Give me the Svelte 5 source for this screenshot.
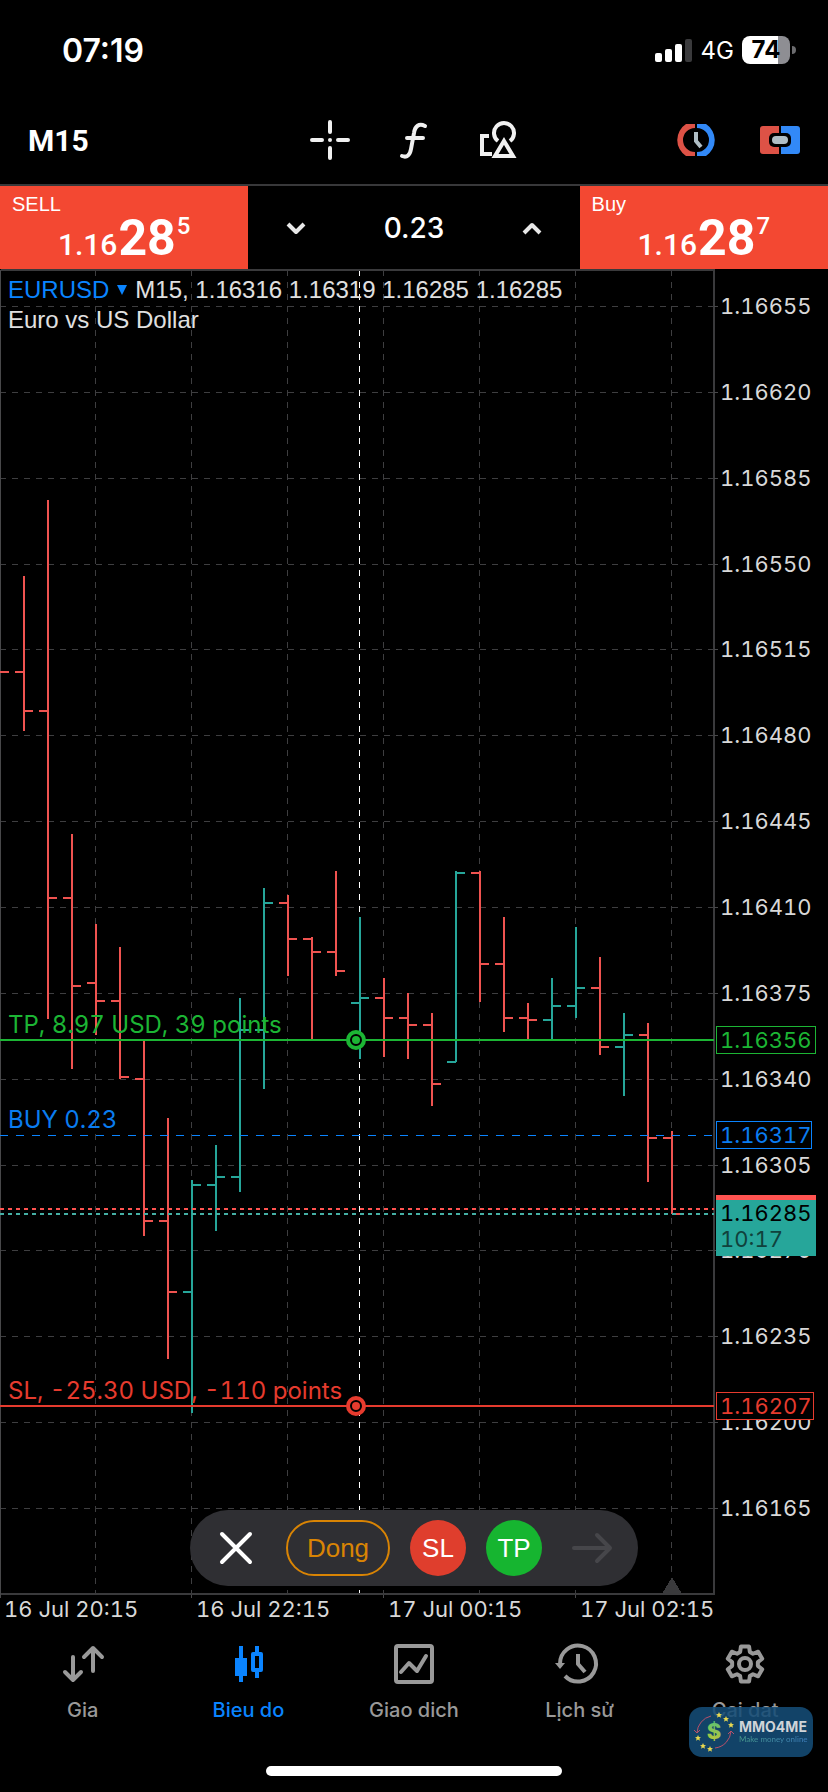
<script lang="ts">
	interface Bar {
		open: number;
		high: number;
		low: number;
		close: number;
		up?: boolean;
	}

	let volume = $state('0.23');
	let activeTab = $state('chart');

	const tabs = [
		{ id: 'quotes', label: 'Gia' },
		{ id: 'chart', label: 'Bieu do' },
		{ id: 'trade', label: 'Giao dich' },
		{ id: 'history', label: 'Lịch sử' },
		{ id: 'settings', label: 'Cai dat' }
	];

	const BAR_STEP = 24;
	const TICK = 9;
	const PLOT_RIGHT = 714;
	const PLOT_TOP = 270;
	const PLOT_BOTTOM = 1594;

	// bar levels in chart units, top = 0
	const bars: Bar[] = [
		{ open: 672, high: 576, low: 731, close: 711 },
		{ open: 711, high: 500, low: 1019, close: 898 },
		{ open: 898, high: 834, low: 1069, close: 986 },
		{ open: 983, high: 924, low: 1035, close: 1001 },
		{ open: 1001, high: 947, low: 1079, close: 1077 },
		{ open: 1079, high: 1041, low: 1236, close: 1221 },
		{ open: 1221, high: 1118, low: 1359, close: 1292 },
		{ open: 1292, high: 1180, low: 1413, close: 1185, up: true },
		{ open: 1185, high: 1145, low: 1231, close: 1177, up: true },
		{ open: 1177, high: 998, low: 1192, close: 1030, up: true },
		{ open: 1030, high: 888, low: 1089, close: 903, up: true },
		{ open: 903, high: 895, low: 976, close: 939 },
		{ open: 939, high: 937, low: 1039, close: 952 },
		{ open: 952, high: 871, low: 976, close: 971 },
		{ open: 1003, high: 917, low: 1059, close: 998, up: true },
		{ open: 998, high: 978, low: 1057, close: 1018 },
		{ open: 1018, high: 993, low: 1059, close: 1025 },
		{ open: 1025, high: 1013, low: 1106, close: 1084 },
		{ open: 1062, high: 871, low: 1062, close: 873, up: true },
		{ open: 873, high: 871, low: 1002, close: 964 },
		{ open: 964, high: 917, low: 1032, close: 1018 },
		{ open: 1018, high: 1003, low: 1041, close: 1020 },
		{ open: 1020, high: 978, low: 1039, close: 1006, up: true },
		{ open: 1006, high: 927, low: 1018, close: 988, up: true },
		{ open: 988, high: 957, low: 1055, close: 1047 },
		{ open: 1047, high: 1013, low: 1096, close: 1035, up: true },
		{ open: 1035, high: 1023, low: 1182, close: 1138 },
		{ open: 1138, high: 1131, low: 1214, close: 1214 }
	];

	const gridX = [95, 191, 287, 383, 479, 575, 671];

	// 35 points between grid lines
	const gridY = Array.from({ length: 15 }, (_, i) => ({
		y: Math.round(306 + (i * 1202) / 14),
		price: (1.16655 - i * 0.00035).toFixed(5)
	}));

	const times = [
		{ x: 0, text: '16 Jul 20:15' },
		{ x: 192, text: '16 Jul 22:15' },
		{ x: 384, text: '17 Jul 00:15' },
		{ x: 576, text: '17 Jul 02:15' }
	];

	const levels = [
		{ kind: 'tp', y: 1040, label: 'TP, 8.97 USD, 39 points', price: '1.16356', box: 100 },
		{ kind: 'entry', y: 1135, label: 'BUY 0.23', price: '1.16317', box: 96 },
		{ kind: 'sl', y: 1406, label: 'SL, -25.30 USD, -110 points', price: '1.16207', box: 98 }
	];

	const gear = Array.from({ length: 6 }, (_, i) => {
		const at = (r: number, deg: number) => {
			const a = ((i * 60 - 90 + deg) * Math.PI) / 180;
			return `${(20 + r * Math.cos(a)).toFixed(2)},${(20 + r * Math.sin(a)).toFixed(2)}`;
		};
		return [at(13, -22), at(18, -13), at(18, 13), at(13, 22)].join(' ');
	}).join(' ');

	const stars = [
		[30, 8], [37, 12], [42, 18], [9, 31], [14, 39], [21, 42]
	];

	function barPath(bar: Bar, x: number) {
		return `M${x} ${bar.high}V${bar.low}M${x - TICK} ${bar.open}H${x}M${x} ${bar.close}H${x + TICK}`;
	}

	function step(delta: number) {
		volume = Math.max(0.01, Number(volume) + delta).toFixed(2);
	}
</script>

{#snippet price(base: string, big: string, sup: string)}
	<span class="price">
		<span class="price-base">{base}</span>
		<span class="price-big">{big}</span>
		<span class="price-sup">{sup}</span>
	</span>
{/snippet}

<div class="app">
	<header class="status">
		<time class="clock">07:19</time>
		<div class="status-right">
			<svg class="signal" viewBox="0 0 38 24" aria-hidden="true">
				<rect x="0" y="15" width="7" height="9" rx="2" />
				<rect x="10" y="11" width="7" height="13" rx="2" />
				<rect x="20" y="6" width="7" height="18" rx="2" />
				<rect class="signal-off" x="30" y="1" width="7" height="23" rx="2" />
			</svg>
			<span class="network">4G</span>
			<span class="battery"><span class="battery-level">74</span></span>
		</div>
	</header>

	<nav class="toolbar">
		<button class="timeframe" type="button">M15</button>
		<div class="tools">
			<button class="icon-button" type="button" aria-label="Crosshair">
				<svg viewBox="0 0 40 40" class="line-icon">
					<path d="M20 2V12M20 28V38M2 20H12M28 20H38" />
					<circle cx="20" cy="20" r="2" fill="currentColor" stroke="none" />
				</svg>
			</button>
			<button class="icon-button" type="button" aria-label="Indicators">
				<svg viewBox="0 0 40 40" class="line-icon">
					<path d="M31 6C25 3 21 6 20 13L17 29C16 35 13 38 8 36M13 18H29" />
				</svg>
			</button>
			<button class="icon-button" type="button" aria-label="Objects">
				<svg viewBox="0 0 40 40" class="line-icon">
					<path d="M20 21A10 10 0 1 1 32 21" stroke-linecap="butt" />
					<path d="M26 21L35 36H17Z" stroke-linejoin="miter" />
					<path d="M11 16H4V34H14" stroke-linecap="butt" stroke-linejoin="miter" />
				</svg>
			</button>
		</div>
		<div class="tools tools-end">
			<button class="icon-button" type="button" aria-label="Trading sessions">
				<svg viewBox="0 0 40 40">
					<path class="fill-red" d="M19 4H10A19 19 0 0 0 10 36H19V32A12 12 0 0 1 19 8Z" />
					<path class="fill-blue" d="M21 4H30A19 19 0 0 1 30 36H21V32A12 12 0 0 0 21 8Z" />
					<path class="hand" d="M20 12V21L25 27" />
				</svg>
			</button>
			<button class="icon-button" type="button" aria-label="One click trading">
				<svg viewBox="0 0 40 40">
					<path class="fill-red" d="M3 6H19V34H3Q0 34 0 31V9Q0 6 3 6Z" />
					<path class="fill-blue" d="M21 6H37Q40 6 40 9V31Q40 34 37 34H21Z" />
					<rect x="9" y="13" width="22" height="14" rx="5" />
					<rect class="fill-pill" x="12" y="16" width="16" height="8" rx="4" />
				</svg>
			</button>
		</div>
	</nav>

	<section class="deal">
		<button class="side" type="button">
			<span class="side-label">SELL</span>
			{@render price('1.16', '28', '5')}
		</button>
		<div class="volume">
			<button class="step" type="button" aria-label="Decrease volume" onclick={() => step(-0.01)}>
				<svg viewBox="0 0 24 24" class="line-icon"><path d="M4 8L12 16L20 8" stroke-linecap="butt" /></svg>
			</button>
			<input aria-label="Volume" bind:value={volume} />
			<button class="step" type="button" aria-label="Increase volume" onclick={() => step(0.01)}>
				<svg viewBox="0 0 24 24" class="line-icon"><path d="M4 17L12 9L20 17" stroke-linecap="butt" /></svg>
			</button>
		</div>
		<button class="side" type="button">
			<span class="side-label">Buy</span>
			{@render price('1.16', '28', '7')}
		</button>
	</section>

	<main class="chart">
		<svg class="plot" viewBox="0 268 828 1360" role="img" aria-label="EURUSD M15 bar chart">
			<g class="grid">
				{#each gridX as x}
					<path d="M{x}.5 {PLOT_TOP}V{PLOT_BOTTOM}" />
				{/each}
				{#each gridY as line}
					<path d="M0 {line.y}.5H{PLOT_RIGHT}" />
				{/each}
			</g>
			<path class="period" d="M359.5 {PLOT_TOP}V{PLOT_BOTTOM}" />

			<path class="frame" d="M1 {PLOT_TOP}H{PLOT_RIGHT}V{PLOT_BOTTOM}H0" />
			<path class="ticks" d="M0.5 {PLOT_TOP}V1598M191.5 1595V1598M383.5 1595V1598M575.5 1595V1598" />
			<path class="marker" d="M672 1577L682 1594H662Z" />

			<!-- close of the bar just off the left edge -->
			<path class="bar" d="M0 {bars[0].open}H{TICK}" />
			{#each bars as bar, i}
				<path class={bar.up ? 'bar up' : 'bar'} d={barPath(bar, (i + 1) * BAR_STEP)} />
			{/each}

			<path class="quote ask" d="M0 1209H{PLOT_RIGHT}" />
			<path class="quote bid" d="M0 1214H{PLOT_RIGHT}" />

			{#each gridY as line}
				<path class="ticks" d="M{PLOT_RIGHT} {line.y}.5H718" />
				<text x="720" y={line.y + 8}>{line.price}</text>
			{/each}

			{#each levels as level}
				<g class={level.kind}>
					<path class="level" d="M0 {level.y}H{PLOT_RIGHT}" />
					<text class="level-label" x="8" y={level.y - 7}>{level.label}</text>
					<rect class="tag" x="716.5" y={level.y - 13.5} width={level.box - 1} height="27" />
					<text x="720" y={level.y + 8}>{level.price}</text>
					{#if level.kind !== 'entry'}
						<circle class="handle" cx="356" cy={level.y} r="8" />
						<circle class="handle-dot" cx="356" cy={level.y} r="4" />
					{/if}
				</g>
			{/each}

			<rect class="ask-tag" x="716" y="1195" width="100" height="10" />
			<rect class="bid-tag" x="716" y="1200" width="100" height="56" />
			<text class="bid-price" x="720" y="1221">1.16285</text>
			<text class="bid-timer" x="720" y="1247">10:17</text>

			{#each times as time}
				<text x={time.x + 4} y="1617">{time.text}</text>
			{/each}
		</svg>

		<div class="symbol">
			<div class="symbol-row">
				<button type="button" class="symbol-name">
					EURUSD
					<svg viewBox="0 0 10 10" width="10" height="10"><path d="M0 0H10L5 10Z" fill="currentColor" /></svg>
				</button>
				<span>M15, 1.16316 1.16319 1.16285 1.16285</span>
			</div>
			<div>Euro vs US Dollar</div>
		</div>

		<div class="position-bar">
			<button type="button" class="dismiss" aria-label="Dismiss">
				<svg viewBox="0 0 40 40" class="line-icon"><path d="M6 6L34 34M34 6L6 34" /></svg>
			</button>
			<button type="button" class="close-position">Dong</button>
			<button type="button" class="round round-sl">SL</button>
			<button type="button" class="round round-tp">TP</button>
			<button type="button" class="next" aria-label="Next">
				<svg viewBox="0 0 40 40" class="line-icon"><path d="M2 20H37M25 7L38 20L25 33" /></svg>
			</button>
		</div>
	</main>

	<nav class="tabs">
		{#each tabs as tab}
			<button
				type="button"
				class="tab"
				class:active={activeTab === tab.id}
				onclick={() => (activeTab = tab.id)}
			>
				<svg viewBox="0 0 40 40" class="line-icon">
					{#if tab.id === 'quotes'}
						<path d="M10 13V36M2 28L10 36L18 28M30 27V4M21 13L30 4L39 13" />
					{:else if tab.id === 'chart'}
						<path d="M13 2V38M29 2V8M29 28V34" stroke-linecap="butt" />
						<rect x="7" y="14" width="12" height="18" fill="currentColor" stroke="none" />
						<rect x="25" y="10" width="8" height="16" />
					{:else if tab.id === 'trade'}
						<rect x="2" y="2" width="36" height="36" rx="2" />
						<path d="M7 28L15 19L23 27L32 12" />
					{:else if tab.id === 'history'}
						<path d="M0 20A18 18 0 1 1 5 32" stroke-linecap="butt" />
						<path d="M18 10V20L25 28" stroke-linecap="butt" />
						<path d="M-5 19H5L0 25Z" fill="currentColor" stroke="none" />
					{:else}
						<polygon points={gear} />
						<circle cx="20" cy="20" r="6" />
					{/if}
				</svg>
				<span>{tab.label}</span>
			</button>
		{/each}
	</nav>

	<div class="home"></div>

	<a class="badge" href="#mmo4me">
		<svg viewBox="0 0 50 50" width="50" height="50" aria-hidden="true">
			<defs>
				<linearGradient id="dollar" x1="0" y1="0" x2="0" y2="1">
					<stop offset="0" stop-color="#4cc07a" />
					<stop offset="1" stop-color="#c8c832" />
				</linearGradient>
			</defs>
			<path class="swoosh" d="M22 9A18 18 0 0 0 8 26M5 23L8 26L11 23" />
			<path class="swoosh" d="M26 41A18 18 0 0 0 42 24M39 27L42 24L45 27" />
			<text class="dollar" x="25" y="32" text-anchor="middle" fill="url(#dollar)">$</text>
			{#each stars as [x, y]}
				<path
					class="star"
					transform="translate({x} {y})"
					d="M0-3L.9-1L3-.8L1.4.6L1.9 2.7L0 1.6L-1.9 2.7L-1.4.6L-3-.8L-.9-1Z"
				/>
			{/each}
		</svg>
		<span class="badge-text">
			<strong>MMO4ME</strong>
			<small>Make money online</small>
		</span>
	</a>
</div>

<style>
	:global(body) {
		background: #000;
	}

	.app {
		position: relative;
		display: flex;
		flex-direction: column;
		background: #000;
		color: #fff;
		font-family: Inter, 'Liberation Sans', sans-serif;
	}

	button,
	input {
		margin: 0;
		padding: 0;
		border: none;
		background: none;
		color: inherit;
		font: inherit;
	}

	button {
		cursor: pointer;
	}

	svg {
		display: block;
	}

	.line-icon {
		fill: none;
		stroke: currentColor;
		stroke-width: 4;
		stroke-linecap: round;
		stroke-linejoin: round;
		overflow: visible;
	}

	/* status bar */
	.status {
		display: flex;
		align-items: center;
		justify-content: space-between;
		height: 100px;
		padding: 0 32px 0 62px;
	}

	.clock {
		font-size: 32px;
		font-weight: 600;
	}

	.status-right {
		display: flex;
		align-items: center;
		gap: 8px;
	}

	.signal {
		width: 38px;
		height: 24px;
		fill: #fff;
	}

	.signal-off {
		fill: #3a3a3c;
	}

	.network {
		font-size: 24px;
	}

	.battery {
		position: relative;
		width: 48px;
		height: 28px;
		margin-right: 6px;
		border-radius: 8px;
		background: linear-gradient(90deg, #fff 75%, #8e8e93 75%);
	}

	.battery::after {
		content: '';
		position: absolute;
		top: 10px;
		right: -6px;
		width: 4px;
		height: 8px;
		border-radius: 0 4px 4px 0;
		background: #6b6b6e;
	}

	.battery-level {
		display: block;
		color: #000;
		font-size: 24px;
		font-weight: 700;
		line-height: 28px;
		text-align: center;
	}

	/* toolbar */
	.toolbar {
		display: grid;
		grid-template-columns: 1fr auto 1fr;
		align-items: center;
		height: 80px;
		padding: 0 28px 4px;
		border-bottom: 2px solid #38383a;
	}

	.timeframe {
		justify-self: start;
		font-family: Roboto, sans-serif;
		font-size: 30px;
		font-weight: 700;
	}

	.tools {
		display: flex;
		gap: 44px;
		color: #f0f0f0;
	}

	.tools-end {
		justify-content: flex-end;
	}

	.icon-button {
		width: 40px;
		height: 40px;
	}

	.fill-red {
		fill: #dd5246;
	}

	.fill-blue {
		fill: #3289f7;
	}

	.fill-pill {
		fill: #b0bec5;
	}

	.hand {
		fill: none;
		stroke: #b0bec5;
		stroke-width: 4;
	}

	/* one click trading */
	.deal {
		display: grid;
		grid-template-columns: 3fr 4fr 3fr;
		height: 82px;
	}

	.side {
		display: flex;
		flex-direction: column;
		background: #f34832;
		text-align: left;
	}

	.side-label {
		padding: 8px 12px 0;
		font-family: 'Liberation Sans', sans-serif;
		font-size: 20px;
		line-height: 20px;
	}

	.price {
		display: flex;
		align-items: baseline;
		align-self: center;
		gap: 1px;
		font-family: Roboto, sans-serif;
		font-weight: 700;
		line-height: 48px;
	}

	.price-base {
		font-size: 30px;
		font-weight: 500;
	}

	.price-big {
		font-size: 50px;
	}

	.price-sup {
		align-self: flex-start;
		font-size: 24px;
		font-weight: 500;
		line-height: 24px;
	}

	.volume {
		display: flex;
		align-items: center;
		justify-content: space-between;
		padding: 0 36px;
	}

	.volume input {
		width: 120px;
		font-size: 28px;
		font-weight: 500;
		text-align: center;
	}

	.step {
		width: 24px;
		height: 24px;
		color: #e8e8e8;
	}

	/* chart */
	.chart {
		position: relative;
	}

	.plot {
		width: 100%;
		fill: #d8d8d8;
		font-size: 22px;
		font-variant-numeric: tabular-nums;
	}

	.plot path {
		fill: none;
		shape-rendering: crispEdges;
	}

	.grid path {
		stroke: #3e3e40;
		stroke-dasharray: 6 6;
	}

	.period {
		stroke: #fff;
		stroke-dasharray: 6 6;
	}

	.frame {
		stroke: #3a3a3c;
		stroke-width: 2;
	}

	.ticks {
		stroke: #48484a;
	}

	.plot .marker {
		fill: #3a3a3c;
	}

	.bar {
		stroke: #ef5350;
		stroke-width: 2;
	}

	.up {
		stroke: #26a69a;
	}

	.quote {
		stroke-width: 2;
		stroke-dasharray: 4 4;
	}

	.ask {
		stroke: #ff5350;
	}

	.bid {
		stroke: #45b0a5;
	}

	.tp {
		fill: #1cb534;
		stroke: #1cb534;
	}

	.entry {
		fill: #0a7cf0;
		stroke: #0a84ff;
	}

	.sl {
		fill: #e63b2e;
		stroke: #e63b2e;
	}

	.plot text {
		stroke: none;
	}

	.level {
		stroke-width: 2;
	}

	.level-label {
		font-size: 24px;
	}

	.entry .level {
		stroke-width: 1;
		stroke-dasharray: 8 8;
	}

	.tag {
		fill: #000;
		shape-rendering: crispEdges;
	}

	.handle {
		fill: #000;
		stroke-width: 4;
	}

	.handle-dot {
		stroke: none;
	}

	.ask-tag {
		fill: #ff5350;
	}

	.bid-tag {
		fill: #26a69a;
	}

	.bid-price {
		fill: #000;
	}

	.bid-timer {
		fill: #10413c;
	}

	.symbol {
		position: absolute;
		top: 7px;
		left: 8px;
		color: #e0e0e0;
		font-family: 'Liberation Sans', sans-serif;
		font-size: 24px;
		line-height: 30px;
	}

	.symbol-row,
	.symbol-name {
		display: flex;
		align-items: center;
		gap: 8px;
	}

	.symbol-name {
		color: #0a84ff;
	}

	.position-bar {
		position: absolute;
		bottom: 42px;
		left: 50%;
		transform: translateX(-50%);
		display: flex;
		align-items: center;
		gap: 20px;
		height: 76px;
		padding: 0 26px;
		border-radius: 38px;
		background: #2f2f33;
		font-family: 'Liberation Sans', sans-serif;
		font-size: 26px;
		box-sizing: border-box;
	}

	.dismiss {
		width: 40px;
		height: 40px;
		margin-right: 10px;
	}

	.close-position {
		width: 104px;
		height: 56px;
		border: 2px solid #d98404;
		border-radius: 28px;
		color: #d98404;
	}

	.round {
		width: 56px;
		height: 56px;
		border-radius: 50%;
	}

	.round-sl {
		background: #df3e2d;
	}

	.round-tp {
		background: #16b530;
	}

	.next {
		width: 40px;
		height: 40px;
		margin-left: 10px;
		color: #46464a;
	}

	/* tab bar */
	.tabs {
		display: grid;
		grid-template-columns: repeat(5, 1fr);
		padding-top: 16px;
	}

	.tab {
		display: flex;
		flex-direction: column;
		align-items: center;
		gap: 14px;
		color: #999;
		font-size: 20px;
		font-weight: 500;
		line-height: 24px;
	}

	.tab svg {
		width: 40px;
		height: 40px;
	}

	.active {
		color: #0a84ff;
	}

	.home {
		align-self: center;
		width: 296px;
		height: 10px;
		margin: 44px 0 16px;
		border-radius: 5px;
		background: #fff;
	}

	.badge {
		position: absolute;
		right: 15px;
		bottom: 35px;
		display: flex;
		align-items: center;
		width: 124px;
		height: 50px;
		border-radius: 13px;
		background: rgb(20 76 118 / 0.88);
		text-decoration: none;
	}

	.swoosh {
		fill: none;
		stroke: #b8506a;
		stroke-width: 1;
	}

	.star {
		fill: #e8d850;
	}

	.dollar {
		font-size: 22px;
		font-weight: 800;
	}

	.badge-text {
		display: flex;
		flex-direction: column;
	}

	.badge-text strong {
		color: #d0d4d8;
		font-size: 14px;
		line-height: 14px;
	}

	.badge-text small {
		background: linear-gradient(90deg, #4a9d8c, #3f7fc0);
		background-clip: text;
		color: transparent;
		font-family: Lato, sans-serif;
		font-size: 8px;
		line-height: 10px;
	}
</style>
